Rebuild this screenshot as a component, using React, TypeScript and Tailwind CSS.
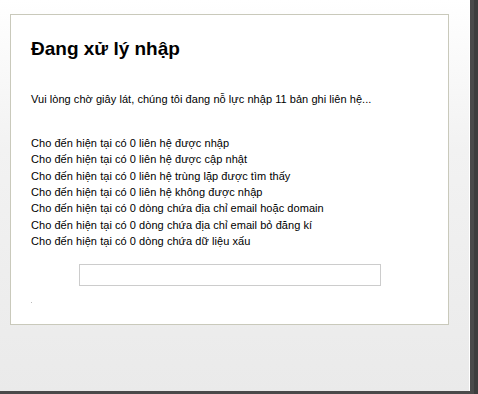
const lines = [
  "Cho đến hiện tại có 0 liên hệ được nhập",
  "Cho đến hiện tại có 0 liên hệ được cập nhật",
  "Cho đến hiện tại có 0 liên hệ trùng lặp được tìm thấy",
  "Cho đến hiện tại có 0 liên hệ không được nhập",
  "Cho đến hiện tại có 0 dòng chứa địa chỉ email hoặc domain",
  "Cho đến hiện tại có 0 dòng chứa địa chỉ email bỏ đăng kí",
  "Cho đến hiện tại có 0 dòng chứa dữ liệu xấu",
];

export default function App() {
  return (
    <div className="flex h-[394px] w-[478px] overflow-hidden font-['Liberation_Sans',Tahoma,sans-serif] text-black">
      {/* page */}
      <div className="flex w-[470px] flex-col">
        <div className="flex-1 border-r border-white bg-[linear-gradient(to_bottom,#ffffff_0px,#f2f2f2_150px,#eaeaea_394px)] pl-[10px] pt-[14px]">
          <div className="flex h-[311px] w-[439px] flex-col border border-[#c9c9bb] bg-white px-[20px] pt-[22px]">
            <h1 className="text-[19px] leading-[24px] font-bold">Đang xử lý nhập</h1>

            <p className="mt-[30px] text-[11px] leading-[16px] tracking-[0.05px]">
              Vui lòng chờ giây lát, chúng tôi đang nỗ lực nhập 11 bản ghi liên hệ...
            </p>

            <div className="mt-[28px] flex flex-col text-[11px] leading-[16.33px] tracking-[0.05px]">
              {lines.map((l) => (
                <div key={l}>{l}</div>
              ))}
            </div>

            {/* progress box */}
            <div className="mt-[15px] ml-[48px] h-[22px] w-[302px] border border-[#cccccc] bg-white" />

            <div className="mt-[16px] h-px w-px bg-[#bbbbbb]" />
          </div>
        </div>
        <div className="h-[3px] bg-[#4a4a4a]" />
      </div>

      {/* right edge */}
      <div className="flex w-[8px]">
        <div className="w-[4px] bg-[#4a4a4a]" />
        <div className="w-[4px] bg-[#3d3d3d]" />
      </div>
    </div>
  );
}
